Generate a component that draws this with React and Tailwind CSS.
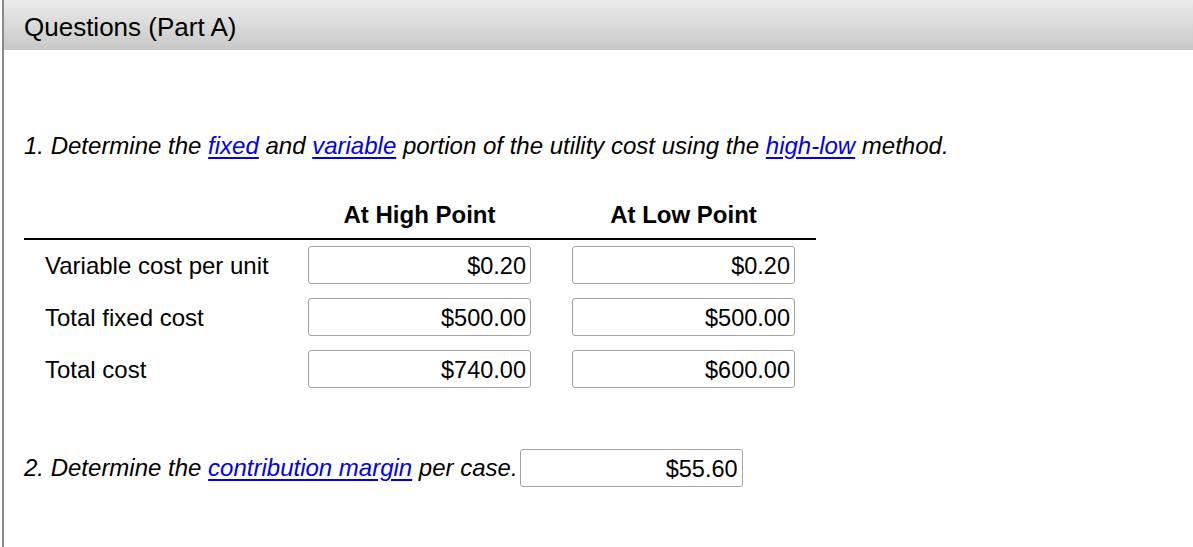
import React from 'react';

const rows = [
    { label: 'Variable cost per unit', high: '$0.20', low: '$0.20' },
    { label: 'Total fixed cost', high: '$500.00', low: '$500.00' },
    { label: 'Total cost', high: '$740.00', low: '$600.00' },
];

const Box = ({ value }) => (
    <div className="w-[223px] h-[38px] border border-[#a3a3a3] rounded-[3px] flex items-center justify-end pr-[4px] pt-[1px] bg-white text-[23.5px]">
        {value}
    </div>
);

const Link = ({ children }) => (
    <span className="text-[#0000ee] underline underline-offset-[3px]">{children}</span>
);

export default function App() {
    return (
        <div className="h-[547px] bg-white text-black font-['Liberation_Sans',Arial,sans-serif] overflow-hidden">
            <div className="ml-[2px] h-full border-l-2 border-[#8a8a8a]">
                {/* Header */}
                <div className="h-[50px] bg-gradient-to-b from-[#ebebeb] to-[#c8c8c8] flex items-center pl-5 pt-1 text-[26px]">
                    Questions (Part A)
                </div>

                <div className="pl-5 pt-[82px]">
                    <p className="italic text-[24px] leading-[28px]">
                        1. Determine the <Link>fixed</Link> and <Link>variable</Link> portion of the utility cost using the <Link>high-low</Link> method.
                    </p>

                    {/* Table */}
                    <div className="mt-[41px] w-[792px] text-[24px] leading-[28px]">
                        <div className="grid grid-cols-[284px_264px_244px] pb-[9px] border-b-2 border-black font-bold">
                            <div></div>
                            <div className="w-[223px] text-center">At High Point</div>
                            <div className="w-[223px] text-center">At Low Point</div>
                        </div>
                        <div className="mt-[6px] flex flex-col gap-[14px]">
                            {rows.map((r) => (
                                <div key={r.label} className="grid grid-cols-[284px_264px_244px] items-center">
                                    <div className="pl-[21px] pt-[1px]">{r.label}</div>
                                    <Box value={r.high} />
                                    <Box value={r.low} />
                                </div>
                            ))}
                        </div>
                    </div>

                    {/* Question 2 */}
                    <div className="mt-[61px] flex items-center text-[24px] leading-[28px]">
                        <span className="italic">
                            2. Determine the <Link>contribution margin</Link> per case.
                        </span>
                        <div className="ml-[2px]">
                            <Box value="$55.60" />
                        </div>
                    </div>
                </div>
            </div>
        </div>
    );
}
